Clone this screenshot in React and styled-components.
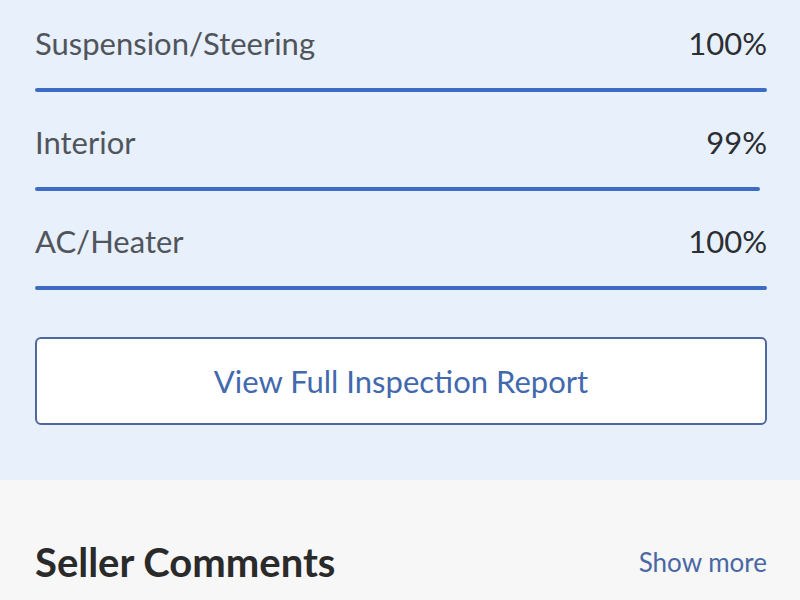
import React from "react";
import styled, { createGlobalStyle } from "styled-components";

const rows = [
  { label: "Suspension/Steering", value: 100 },
  { label: "Interior", value: 99 },
  { label: "AC/Heater", value: 100 },
];

function App() {
  return (
    <>
      <GlobalStyle />
      <Inspection>
        <Rows>
          {rows.map((row) => (
            <Row key={row.label}>
              <Line>
                <Label>{row.label}</Label>
                <Value>{row.value}%</Value>
              </Line>
              <Track>
                <Fill style={{ width: `${row.value}%` }} />
              </Track>
            </Row>
          ))}
        </Rows>
        <ReportButton>View Full Inspection Report</ReportButton>
      </Inspection>
      <Comments>
        <Heading>Seller Comments</Heading>
        <ShowMore>Show more</ShowMore>
      </Comments>
    </>
  );
}

export default App;

const GlobalStyle = createGlobalStyle`
  html, body {
    margin: 0;
    padding: 0;
    background: #f7f7f7;
    font-family: Lato, "Open Sans", sans-serif;
  }
`;

const Inspection = styled.section`
  background: #e8f0fc;
  padding: 23px 33px 55px 35px;
`;

const Rows = styled.div`
  display: flex;
  flex-direction: column;
  gap: 30px;
`;

const Row = styled.div`
  display: flex;
  flex-direction: column;
  gap: 25px;
`;

const Line = styled.div`
  display: flex;
  justify-content: space-between;
  align-items: center;
  height: 40px;
`;

const Label = styled.span`
  font-size: 31px;
  color: #50555b;
`;

const Value = styled.span`
  font-size: 31px;
  color: #2b2e33;
`;

const Track = styled.div`
  height: 4px;
`;

const Fill = styled.div`
  height: 100%;
  background: #3d6cc4;
  border-radius: 2px;
`;

const ReportButton = styled.button`
  display: block;
  width: 100%;
  height: 88px;
  margin-top: 47px;
  background: #ffffff;
  border: 2px solid #4f679a;
  border-radius: 6px;
  font-family: Lato, sans-serif;
  font-size: 31px;
  color: #4269ad;
`;

const Comments = styled.section`
  display: flex;
  justify-content: space-between;
  align-items: center;
  padding: 62px 33px 0 35px;
  height: 40px;
`;

const Heading = styled.h2`
  margin: 0;
  font-size: 40px;
  font-weight: 700;
  color: #2a2a2a;
`;

const ShowMore = styled.a`
  font-size: 26px;
  color: #4a68a3;
`;
